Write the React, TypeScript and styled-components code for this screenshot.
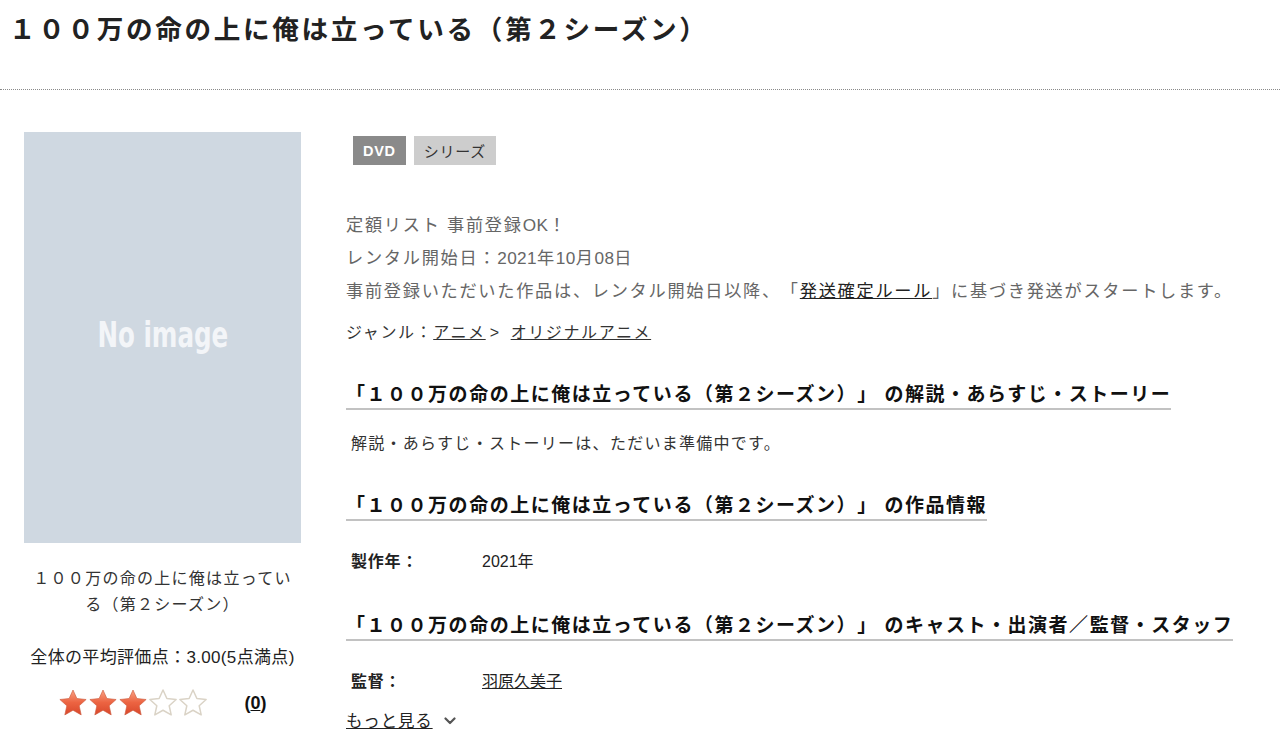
import React from 'react';
import styled, { createGlobalStyle } from 'styled-components';

// == styles =======================================================================================
const GlobalStyle = createGlobalStyle`
  html, body {
    margin: 0;
    padding: 0;
    background: #ffffff;
  }
  body {
    font-family: "Liberation Sans", "Noto Sans CJK JP", sans-serif;
    color: #333333;
    text-spacing-trim: space-all;
  }
`;

const Header = styled.header`
  height: 90px;
  padding: 12px 0 0 9px;
  box-sizing: border-box;
  border-bottom: 1px dotted #8a8a8a;
`;

const PageTitle = styled.h1`
  margin: 0;
  font-size: 26.6px;
  line-height: 36px;
  font-weight: bold;
  letter-spacing: 0.1em;
  color: #222222;
`;

const Main = styled.main`
  display: flex;
  gap: 45px;
  padding: 42px 20px 0 24px;
`;

const Aside = styled.aside`
  flex: 0 0 277px;
  display: flex;
  flex-direction: column;
  align-items: center;
`;

const Placeholder = styled.div`
  width: 277px;
  height: 411px;
  background: #cfd8e1;
  display: flex;
  align-items: center;
  justify-content: center;
`;

const PlaceholderText = styled.span`
  font-family: "Liberation Sans Narrow", "DejaVu Sans Condensed", "Liberation Sans", sans-serif;
  font-weight: bold;
  font-size: 35px;
  color: #f3f5f8;
  transform: scaleX(0.78);
  margin-top: -6px;
`;

const Caption = styled.p`
  margin: 23px 0 0;
  padding: 0 8px;
  text-align: center;
  font-size: 16px;
  line-height: 26px;
  letter-spacing: 0.08em;
  color: #333333;
`;

const RatingText = styled.p`
  margin: 28px 0 0;
  font-size: 17px;
  line-height: 24px;
  letter-spacing: 0.02em;
  color: #222222;
`;

const RatingRow = styled.div`
  display: flex;
  align-items: center;
  gap: 36px;
  margin-top: 18px;
  height: 30px;
`;

const Stars = styled.div`
  display: flex;
  gap: 0;
`;

const Count = styled.span`
  font-size: 18px;
  font-weight: bold;
  color: #111111;

  u {
    text-decoration: underline;
  }
`;

const Content = styled.section`
  flex: 1;
  min-width: 0;
`;

const Badges = styled.div`
  display: flex;
  gap: 8px;
  margin: 4px 0 0 7px;
`;

const Badge = styled.span<{ $dark?: boolean }>`
  display: inline-flex;
  align-items: center;
  height: 29px;
  padding: 0 10px;
  font-size: ${ ( p ) => ( p.$dark ? '14.5px' : '15px' ) };
  font-weight: ${ ( p ) => ( p.$dark ? 'bold' : 'normal' ) };
  background: ${ ( p ) => ( p.$dark ? '#8a8a8a' : '#cdcdcd' ) };
  color: ${ ( p ) => ( p.$dark ? '#ffffff' : '#333333' ) };
  letter-spacing: 0.05em;
`;

const Notice = styled.div`
  margin-top: 44px;
  font-size: 17.2px;
  line-height: 33px;
  letter-spacing: 0.1em;
  color: #666666;

  a {
    color: #222222;
    text-decoration: underline;
  }
`;

const Digits = styled.span`
  letter-spacing: 0.02em;
`;

const Genre = styled.div`
  margin-top: 10px;
  font-size: 16px;
  line-height: 30px;
  letter-spacing: 0.1em;
  color: #333333;

  a {
    color: #333333;
    text-decoration: underline;
  }
`;

const Separator = styled.span`
  margin: 0 10px 0 4px;
`;

const SectionHeading = styled.h2<{ $gap: number }>`
  display: inline-block;
  margin: ${ ( p ) => p.$gap }px 0 0;
  font-size: 19px;
  line-height: 26px;
  font-weight: bold;
  letter-spacing: 0.08em;
  color: #111111;
  border-bottom: 2px solid #c2c2c2;
`;

const SectionText = styled.p`
  margin: 22px 0 0 5px;
  font-size: 16px;
  line-height: 24px;
  letter-spacing: 0.08em;
  color: #333333;
`;

const InfoRow = styled.div`
  display: grid;
  grid-template-columns: 131px 1fr;
  margin: 29px 0 0 5px;
  font-size: 16px;
  line-height: 24px;
  color: #222222;

  a {
    color: #222222;
    text-decoration: underline;
  }
`;

const InfoLabel = styled.span`
  font-weight: bold;
  letter-spacing: 0.05em;
`;

const MoreLink = styled.a`
  display: inline-flex;
  align-items: center;
  gap: 11px;
  margin-top: 15px;
  font-size: 16.5px;
  line-height: 24px;
  letter-spacing: 0.05em;
  color: #222222;
  cursor: pointer;

  span {
    text-decoration: underline;
  }
`;

const Block = styled.div``;

// == element ======================================================================================
const Star = ( { filled, id }: { filled: boolean; id: string } ): JSX.Element => (
  <svg width="30" height="30" viewBox="0 0 24 24">
    <defs>
      <linearGradient id={ id } x1="0" y1="0" x2="0" y2="1">
        <stop offset="0" stopColor="#f9a284" />
        <stop offset="0.5" stopColor="#ec6442" />
        <stop offset="1" stopColor="#d9472b" />
      </linearGradient>
    </defs>
    <path
      d="M12 1.6l3.1 6.8 7.4.8-5.55 5 1.6 7.3L12 17.8l-6.55 3.7 1.6-7.3-5.55-5 7.4-.8z"
      fill={ filled ? `url(#${ id })` : '#ffffff' }
      stroke={ filled ? '#cc5a3d' : '#dad3c6' }
      strokeWidth={ filled ? 0.5 : 1.2 }
      strokeLinejoin="round"
    />
  </svg>
);

const Chevron = (): JSX.Element => (
  <svg width="12" height="8" viewBox="0 0 12 8">
    <polyline points="1.5,1.5 6,6 10.5,1.5" fill="none" stroke="#555555" strokeWidth="2.2" strokeLinecap="round" strokeLinejoin="round" />
  </svg>
);

const TITLE = '１００万の命の上に俺は立っている（第２シーズン）';

const App = (): JSX.Element => {
  const rating = 3;

  return (
    <>
      <GlobalStyle />
      <Header>
        <PageTitle>{ TITLE }</PageTitle>
      </Header>
      <Main>
        <Aside>
          <Placeholder>
            <PlaceholderText>No image</PlaceholderText>
          </Placeholder>
          <Caption>{ TITLE }</Caption>
          <RatingText>全体の平均評価点：3.00(5点満点)</RatingText>
          <RatingRow>
            <Stars>
              { [ 0, 1, 2, 3, 4 ].map( ( i ) => (
                <Star key={ i } id={ `star-grad-${ i }` } filled={ i < rating } />
              ) ) }
            </Stars>
            <Count>(<u>0</u>)</Count>
          </RatingRow>
        </Aside>
        <Content>
          <Badges>
            <Badge $dark>DVD</Badge>
            <Badge>シリーズ</Badge>
          </Badges>
          <Notice>
            <div>定額リスト 事前登録<Digits>OK</Digits>！</div>
            <div>レンタル開始日：<Digits>2021</Digits>年<Digits>10</Digits>月<Digits>08</Digits>日</div>
            <div>事前登録いただいた作品は、レンタル開始日以降、「<a href="#">発送確定ルール</a>」に基づき発送がスタートします。</div>
          </Notice>
          <Genre>
            ジャンル：<a href="#">アニメ</a><Separator>&gt;</Separator><a href="#">オリジナルアニメ</a>
          </Genre>
          <Block>
            <SectionHeading $gap={ 34 }>「{ TITLE }」 の解説・あらすじ・ストーリー</SectionHeading>
            <SectionText>解説・あらすじ・ストーリーは、ただいま準備中です。</SectionText>
          </Block>
          <Block>
            <SectionHeading $gap={ 37 }>「{ TITLE }」 の作品情報</SectionHeading>
            <InfoRow>
              <InfoLabel>製作年：</InfoLabel>
              <span>2021年</span>
            </InfoRow>
          </Block>
          <Block>
            <SectionHeading $gap={ 39 }>「{ TITLE }」 のキャスト・出演者／監督・スタッフ</SectionHeading>
            <InfoRow>
              <InfoLabel>監督：</InfoLabel>
              <span><a href="#">羽原久美子</a></span>
            </InfoRow>
          </Block>
          <MoreLink>
            <span>もっと見る</span>
            <Chevron />
          </MoreLink>
        </Content>
      </Main>
    </>
  );
};

export default App;
